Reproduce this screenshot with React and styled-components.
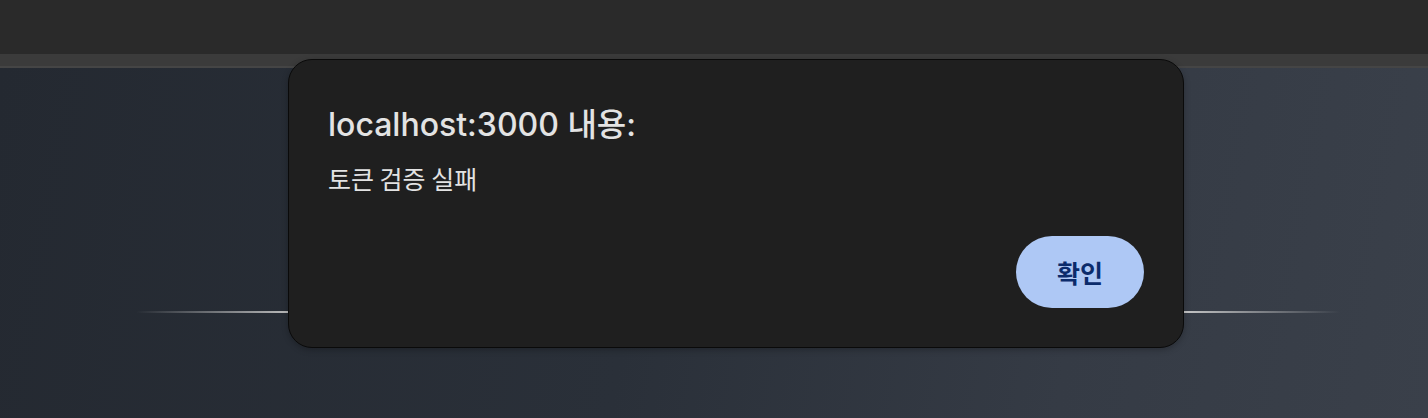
import React from 'react'
import styled, { createGlobalStyle } from 'styled-components'

const GlobalStyle = createGlobalStyle`
  html, body { margin: 0; padding: 0; background: #2a2a2a; }
  body { font-family: Inter, "Noto Sans CJK KR", sans-serif; }
`

const Page = styled.div`
  position: relative;
  width: 1428px;
  height: 418px;
  display: flex;
  flex-direction: column;
  overflow: hidden;
`

const TopBar = styled.div`
  height: 54px;
  background: #2a2a2a;
`

const TabStrip = styled.div`
  height: 12px;
  background: #3b3b3b;
  border-bottom: 2px solid #454545;
`

const Content = styled.div`
  flex: 1;
  background: linear-gradient(100deg, #242931 0%, #2a3039 45%, #353b45 75%, #3a404a 100%);
  display: flex;
  flex-direction: column;
  padding-top: 243px;
`

const Rule = styled.div`
  margin: 0 88px 0 136px;
  height: 2px;
  background: linear-gradient(90deg, rgba(220,220,220,0) 0%, #c8c8c8 14%, #d0d0d0 86%, rgba(220,220,220,0) 100%);
`

const Dialog = styled.div`
  position: absolute;
  left: 288px;
  top: 59px;
  width: 894px;
  height: 287px;
  box-sizing: content-box;
  background: #1f1f1f;
  border: 1px solid #0a0a0a;
  border-radius: 24px;
  display: flex;
  flex-direction: column;
  box-shadow: 0 2px 6px rgba(0, 0, 0, 0.25);
`

const Title = styled.h2`
  margin: 44px 0 0 39px;
  font-size: 32px;
  line-height: 42px;
  font-weight: 500;
  color: #e3e3e3;
  letter-spacing: 0;
`

const Message = styled.p`
  margin: 14px 0 0 39px;
  font-family: "Noto Sans CJK KR", sans-serif;
  font-size: 25px;
  line-height: 36px;
  color: #e3e3e3;
`

const Actions = styled.div`
  display: flex;
  justify-content: flex-end;
  margin-top: auto;
  padding: 0 39px 39px 0;
`

const Button = styled.button`
  width: 128px;
  height: 72px;
  border: none;
  border-radius: 36px;
  background: #aec8f5;
  color: #0b2b6b;
  font-family: "Noto Sans CJK KR", sans-serif;
  font-weight: 700;
  font-size: 25px;
  padding: 0;
  cursor: pointer;
`

export default function App() {
  return (
    <>
      <GlobalStyle />
      <Page>
        <TopBar />
        <TabStrip />
        <Content>
          <Rule />
        </Content>
        <Dialog>
          <Title>localhost:3000 내용:</Title>
          <Message>토큰 검증 실패</Message>
          <Actions>
            <Button>확인</Button>
          </Actions>
        </Dialog>
      </Page>
    </>
  )
}
